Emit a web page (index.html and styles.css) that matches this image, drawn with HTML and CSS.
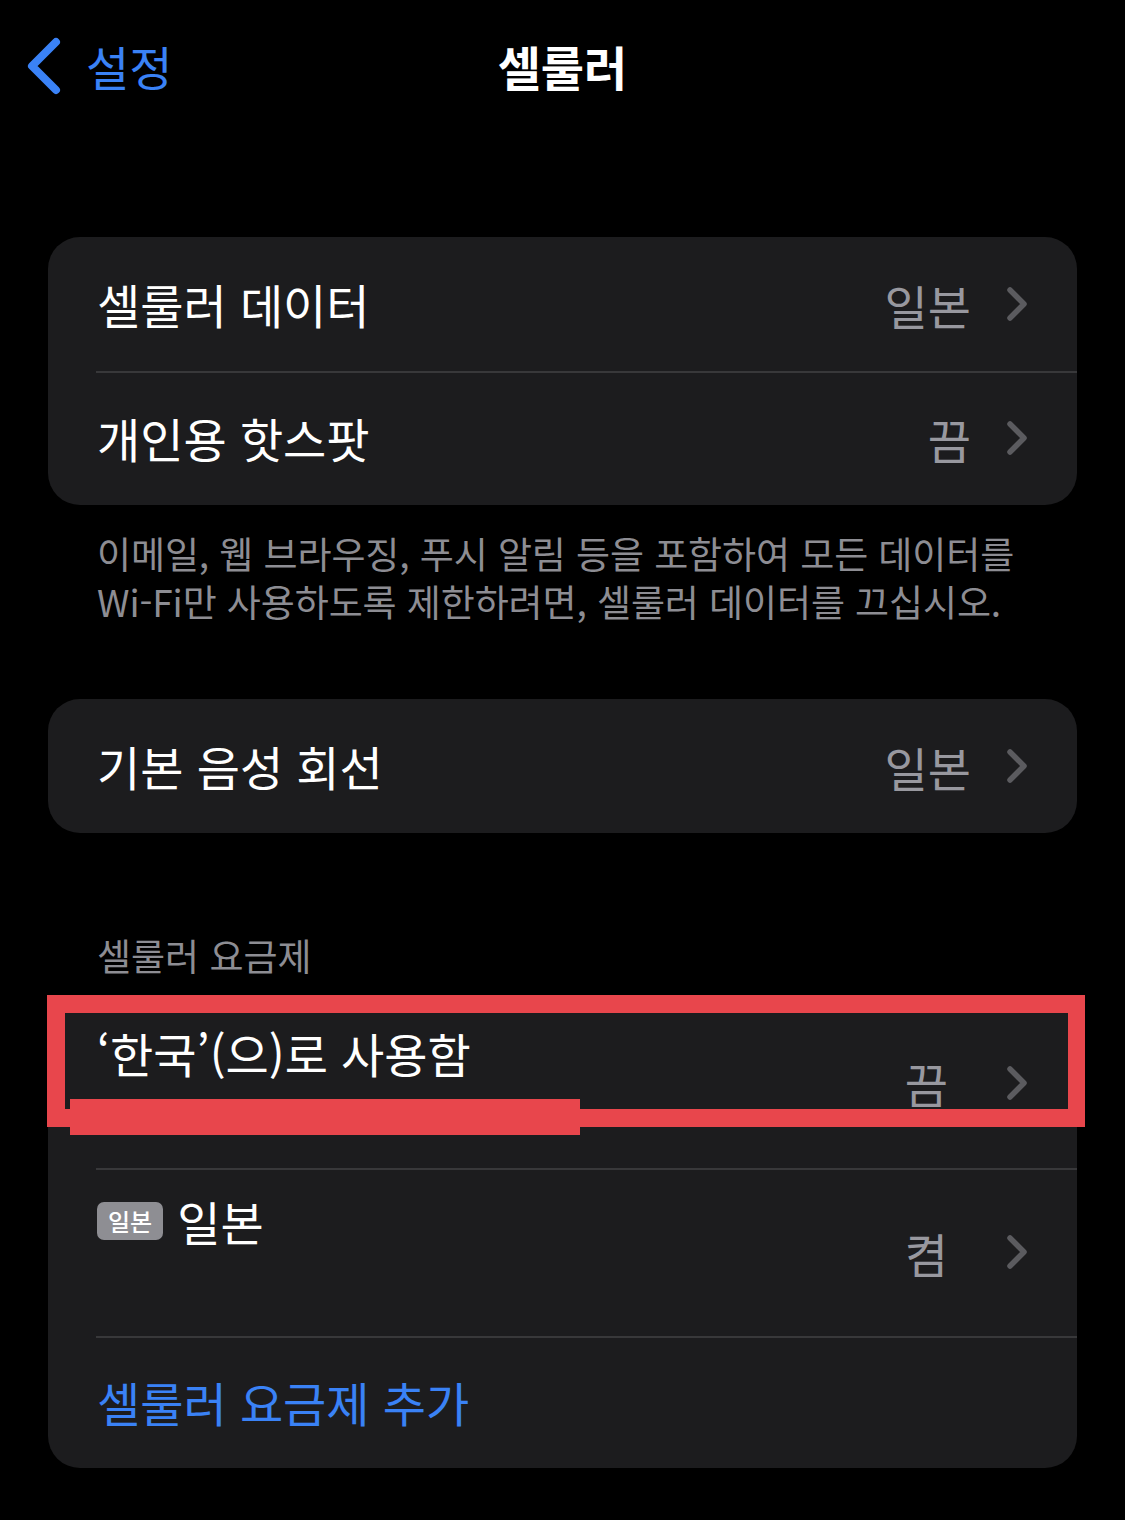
FILE: index.html
```html
<!DOCTYPE html>
<html lang="ko">
<head>
<meta charset="utf-8">
<title>셀룰러</title>
<link rel="stylesheet" href="styles.css">
</head>
<body>
<header class="nav">
  <a class="back">
    <svg class="back-icon" width="40" height="60" viewBox="0 0 40 60"><polyline points="32,6 8,30 32,54" fill="none" stroke="#3a82f6" stroke-width="8" stroke-linecap="round" stroke-linejoin="round"/></svg>
    <span class="back-text">설정</span>
  </a>
  <h1 class="nav-title">셀룰러</h1>
  <span></span>
</header>

<main class="content">
  <section class="group first">
    <div class="row">
      <span class="label">셀룰러 데이터</span>
      <span class="value">일본</span>
      <svg class="chev" width="24" height="36" viewBox="0 0 24 36"><polyline points="5,4 19,18 5,32" fill="none" stroke="#5b5b5f" stroke-width="5.5" stroke-linecap="round" stroke-linejoin="round"/></svg>
    </div>
    <div class="row sep">
      <span class="label">개인용 핫스팟</span>
      <span class="value">끔</span>
      <svg class="chev" width="24" height="36" viewBox="0 0 24 36"><polyline points="5,4 19,18 5,32" fill="none" stroke="#5b5b5f" stroke-width="5.5" stroke-linecap="round" stroke-linejoin="round"/></svg>
    </div>
  </section>
  <p class="footnote">이메일, 웹 브라우징, 푸시 알림 등을 포함하여 모든 데이터를<br>Wi-Fi만 사용하도록 제한하려면, 셀룰러 데이터를 끄십시오.</p>

  <section class="group second">
    <div class="row">
      <span class="label">기본 음성 회선</span>
      <span class="value">일본</span>
      <svg class="chev" width="24" height="36" viewBox="0 0 24 36"><polyline points="5,4 19,18 5,32" fill="none" stroke="#5b5b5f" stroke-width="5.5" stroke-linecap="round" stroke-linejoin="round"/></svg>
    </div>
  </section>

  <h2 class="section-title">셀룰러 요금제</h2>
  <section class="group plans">
    <div class="row tall first-plan">
      <div class="stack">
        <span class="label">‘한국’(으)로 사용함</span>
        <span class="sub"></span>
      </div>
      <span class="value">끔</span>
      <svg class="chev" width="24" height="36" viewBox="0 0 24 36"><polyline points="5,4 19,18 5,32" fill="none" stroke="#5b5b5f" stroke-width="5.5" stroke-linecap="round" stroke-linejoin="round"/></svg>
      <div class="mark-box"></div>
      <div class="mark-bar"></div>
    </div>
    <div class="row tall sep second-plan">
      <div class="stack">
        <span class="label"><span class="badge">일본</span>일본</span>
        <span class="sub"></span>
      </div>
      <span class="value">켬</span>
      <svg class="chev" width="24" height="36" viewBox="0 0 24 36"><polyline points="5,4 19,18 5,32" fill="none" stroke="#5b5b5f" stroke-width="5.5" stroke-linecap="round" stroke-linejoin="round"/></svg>
    </div>
    <div class="row sep add">
      <span class="label link">셀룰러 요금제 추가</span>
    </div>
  </section>
</main>
</body>
</html>
```

FILE: styles.css
```css
* { box-sizing: border-box; }
html, body {
  margin: 0;
  padding: 0;
  background: #000;
}
body {
  width: 1125px;
  height: 1520px;
  overflow: hidden;
  font-family: "Noto Sans CJK KR", "Noto Sans", sans-serif;
  color: #fff;
}

.nav {
  height: 130px;
  display: grid;
  grid-template-columns: 1fr auto 1fr;
  align-items: center;
}
.back {
  display: flex;
  align-items: center;
  padding-left: 24px;
  color: #3a82f6;
}
.back-icon { display: block; margin-top: 2px; }
.back-text {
  font-size: 47px;
  margin-left: 22px;
  line-height: 1;
}
.nav-title {
  margin: 0;
  font-size: 47px;
  font-weight: 700;
  line-height: 1;
}

.content {
  padding: 0 48px;
}
.group {
  background: #1c1c1e;
  border-radius: 32px;
  position: relative;
}
.group.first { margin-top: 107px; }
.group.second { margin-top: 74px; }

.row {
  height: 134px;
  display: flex;
  align-items: center;
  padding-left: 49px;
  padding-right: 48px;
  position: relative;
}
.row.sep::before {
  content: "";
  position: absolute;
  left: 48px;
  right: 0;
  top: 0;
  height: 2px;
  background: #38383a;
}
.label {
  flex: 1;
  font-size: 47px;
  line-height: 56px;
  color: #fff;
  display: flex;
  align-items: center;
}
.value {
  font-size: 47px;
  color: #98989f;
  margin-right: 34px;
}
.chev { display: block; }

.footnote {
  margin: 24px 0 0;
  padding: 0 49px;
  font-size: 37px;
  line-height: 48px;
  color: #8d8d93;
  letter-spacing: -0.1px;
  white-space: nowrap;
}

.section-title {
  margin: 98px 0 0;
  padding-left: 49px;
  font-size: 37px;
  font-weight: 400;
  line-height: 48px;
  color: #8d8d93;
}
.group.plans { margin-top: 18px; }

.row.tall { align-items: center; }
.row.tall .value { margin-right: 57px; }
.row.first-plan { height: 171px; }
.row.second-plan { height: 168px; }
.stack {
  flex: 1;
  display: flex;
  flex-direction: column;
}
.row.first-plan .stack { padding-bottom: 60px; }
.row.second-plan .stack { padding-bottom: 62px; }
.sub { height: 0; }

.badge {
  display: inline-block;
  background: #8e8e93;
  color: #fff;
  font-size: 24px;
  font-weight: 500;
  line-height: 38px;
  padding: 0 11px;
  border-radius: 7px;
  margin-right: 14px;
}

.row.add { height: 132px; }
.link { color: #3a82f6; }

.mark-box {
  position: absolute;
  left: -1px;
  top: -2px;
  width: 1038px;
  height: 132px;
  border: 18px solid #e8464c;
  border-right-width: 17px;
}
.mark-bar {
  position: absolute;
  left: 22px;
  top: 102px;
  width: 510px;
  height: 36px;
  background: #e8464c;
}
```
